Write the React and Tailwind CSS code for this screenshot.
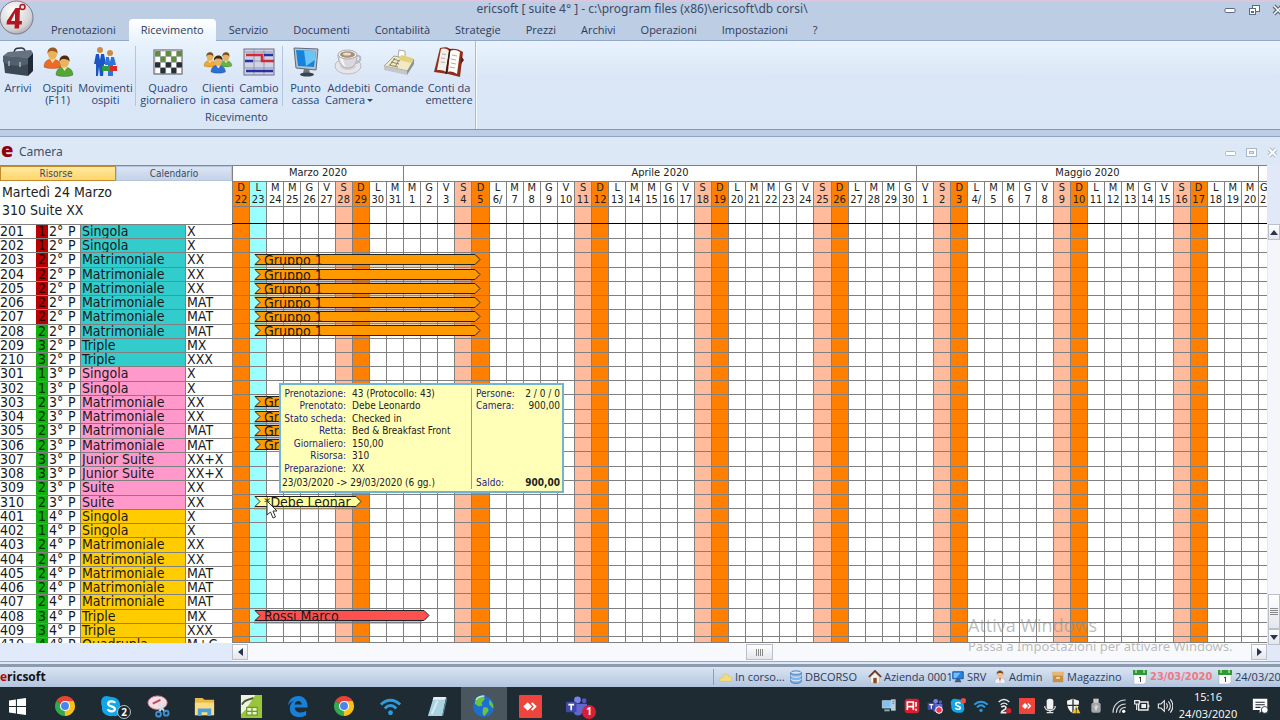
import React, { useState } from 'react';

const MENU = [
  'Prenotazioni',
  'Ricevimento',
  'Servizio',
  'Documenti',
  'Contabilità',
  'Strategie',
  'Prezzi',
  'Archivi',
  'Operazioni',
  'Impostazioni',
  '?',
];

const TEAL = 'bg-[#33cccc]';
const PINK = 'bg-[#ff99cc]';
const AMBER = 'bg-[#ffcc00]';

const group = (shade) => ({ label: 'Gruppo 1', nights: 13, fill: '#ff9900', shade });

const ROOMS = [
  { n: '201', beds: 1, dirty: true, type: 'Singola', code: 'X', color: TEAL },
  { n: '202', beds: 1, dirty: true, type: 'Singola', code: 'X', color: TEAL },
  { n: '203', beds: 2, dirty: true, type: 'Matrimoniale', code: 'XX', color: TEAL, bar: group('tan') },
  { n: '204', beds: 2, dirty: true, type: 'Matrimoniale', code: 'XX', color: TEAL, bar: group('gray') },
  { n: '205', beds: 2, dirty: true, type: 'Matrimoniale', code: 'XX', color: TEAL, bar: group('tan') },
  { n: '206', beds: 2, dirty: true, type: 'Matrimoniale', code: 'MAT', color: TEAL, bar: group('gray') },
  { n: '207', beds: 2, dirty: true, type: 'Matrimoniale', code: 'MAT', color: TEAL, bar: group('tan') },
  { n: '208', beds: 2, type: 'Matrimoniale', code: 'MAT', color: TEAL, bar: group('none') },
  { n: '209', beds: 3, type: 'Triple', code: 'MX', color: TEAL },
  { n: '210', beds: 3, type: 'Triple', code: 'XXX', color: TEAL },
  { n: '301', beds: 1, type: 'Singola', code: 'X', color: PINK },
  { n: '302', beds: 1, type: 'Singola', code: 'X', color: PINK },
  { n: '303', beds: 2, type: 'Matrimoniale', code: 'XX', color: PINK, bar: group('gray') },
  { n: '304', beds: 2, type: 'Matrimoniale', code: 'XX', color: PINK, bar: group('gray') },
  { n: '305', beds: 2, type: 'Matrimoniale', code: 'MAT', color: PINK, bar: group('gray') },
  { n: '306', beds: 2, type: 'Matrimoniale', code: 'MAT', color: PINK, bar: group('none') },
  { n: '307', beds: 3, type: 'Junior Suite', code: 'XX+X', color: PINK },
  { n: '308', beds: 3, type: 'Junior Suite', code: 'XX+X', color: PINK },
  { n: '309', beds: 2, type: 'Suite', code: 'XX', color: PINK },
  { n: '310', beds: 2, type: 'Suite', code: 'XX', color: PINK, bar: { label: '*Debe Leonar', nights: 6, fill: '#ffff99', shade: 'tan' } },
  { n: '401', beds: 1, type: 'Singola', code: 'X', color: AMBER },
  { n: '402', beds: 1, type: 'Singola', code: 'X', color: AMBER },
  { n: '403', beds: 2, type: 'Matrimoniale', code: 'XX', color: AMBER },
  { n: '404', beds: 2, type: 'Matrimoniale', code: 'XX', color: AMBER },
  { n: '405', beds: 2, type: 'Matrimoniale', code: 'MAT', color: AMBER },
  { n: '406', beds: 2, type: 'Matrimoniale', code: 'MAT', color: AMBER },
  { n: '407', beds: 2, type: 'Matrimoniale', code: 'MAT', color: AMBER },
  { n: '408', beds: 3, type: 'Triple', code: 'MX', color: AMBER, bar: { label: 'Rossi Marco', nights: 10, fill: '#ff5050', shade: 'gray' } },
  { n: '409', beds: 3, type: 'Triple', code: 'XXX', color: AMBER },
  { n: '410', beds: 4, type: 'Quadrupla', code: 'M+C', color: AMBER },
];

// 22 March 2020 is a Sunday
const LETTERS = ['D', 'L', 'M', 'M', 'G', 'V', 'S'];
const DAYS = Array.from({ length: 61 }, (_, i) => {
  const date = new Date(2020, 2, 22 + i);
  const w = i % 7;
  const firstMonday = w === 1 && date.getDate() <= 7;
  let bg = 'bg-white';
  if (w === 0) bg = 'bg-[#ff8000]';
  if (w === 6) bg = 'bg-[#ffbb9b]';
  if (i === 1) bg = 'bg-[#99ffff]';
  return { letter: LETTERS[w], num: firstMonday ? `${date.getDate()}/` : date.getDate(), bg };
});

const COLS = 'grid grid-cols-[repeat(60,minmax(0,1fr))_9px]';
const ROWS = 'grid grid-rows-[repeat(29,minmax(0,1fr))_6px]';
const ROOM_COLS = 'grid grid-cols-[36px_12px_18px_14px_106px_1fr]';

const SHADES = {
  tan: 'bg-[#c89030]/40',
  gray: 'bg-[#707090]/40',
  none: 'hidden',
};

/* ---------- ribbon icons ---------- */

const Person = ({ x, y, s = 1, hair, shirt }) => (
  <g transform={`translate(${x} ${y}) scale(${s})`}>
    <path d="M0 20c0-6 4-8 8-8s9 2 9 8c-4 2-13 2-17 0z" fill={shirt} stroke="#0003" />
    <path d="M6 12l2.500 4 3-4z" fill="#f7e3b0" />
    <ellipse cx="8.500" cy="7" rx="4.500" ry="5.500" fill="#e9b25c" />
    <path d="M3.500 7C3 2 6 .5 9 .5S14 3 13.500 7C12.500 4 9 4 7 4 5 4 4.500 5 3.500 7z" fill={hair} />
  </g>
);

const BriefcaseIcon = () => (
  <svg viewBox="0 0 32 32" className="size-8">
    <path d="M12 6c1-4 3-4 7-4 3 0 4 1 4 4" fill="none" stroke="#2b3440" strokeWidth="1.500" />
    <path d="M1 10l5-4 23-2 2 3-5 5z" fill="#66727f" />
    <path d="M1 10l25 2v18L3 27z" fill="#3c4856" />
    <path d="M26 12l5-5v18l-5 5z" fill="#202934" />
    <path d="M1 10l25 2v6c-6 3-19 2-25-2z" fill="#515f6e" />
    <path d="M7 15v5M18 16v5" stroke="#aab4bc" strokeWidth="1.500" />
  </svg>
);

const GuestsIcon = () => (
  <svg viewBox="0 0 32 32" className="size-8">
    <Person x={2} y={1} s={1} hair="#9b5b1c" shirt="#f06a22" />
    <Person x={14} y={9} s={1} hair="#4a2a10" shirt="#52a833" />
  </svg>
);

const MovesIcon = () => (
  <svg viewBox="0 0 32 32" className="size-8">
    <circle cx="10" cy="4" r="3" fill="#c98b45" />
    <path d="M6 8h8l2 10h-2l-1 12h-3l-1-9-1 9H6L6 18H4z" fill="#1b55c4" />
    <path d="M9 8h2l-1 6z" fill="#fff" />
    <circle cx="20" cy="7" r="3" fill="#c98b45" />
    <path d="M16 11h8l2 8h-3v11h-5V19h-3z" fill="#2f74dd" />
    <path d="M19 11h2l-1 5z" fill="#fff" />
    <rect x="12" y="20" width="8" height="5" fill="#2c9b45" />
    <rect x="20" y="20" width="7" height="5" fill="#d92b2b" />
  </svg>
);

const BoardIcon = () => (
  <svg viewBox="0 0 32 32" className="size-8">
    <rect x="2" y="4" width="28" height="24" fill="#fff" stroke="#555" />
    {[0, 1, 2, 3].map((r) =>
      [0, 1, 2, 3, 4].map((c) =>
        (r + c) % 2 === 0 ? (
          <rect key={`${r}-${c}`} x={3 + c * 5.400} y={5 + r * 5.600} width="5.400" height="5.600" rx="1" fill={r < 2 ? '#5d8f3c' : '#26303a'} />
        ) : (
          <rect key={`${r}-${c}`} x={3 + c * 5.400} y={5 + r * 5.600} width="5.400" height="5.600" fill="none" stroke="#999" strokeWidth="0.600" />
        )
      )
    )}
  </svg>
);

const ClientsIcon = () => (
  <svg viewBox="0 0 32 32" className="size-8">
    <Person x={2} y={6} s={0.700} hair="#7a4b1c" shirt="#f0a928" />
    <Person x={18} y={6} s={0.700} hair="#7a4b1c" shirt="#63b447" />
    <Person x={9} y={9} s={0.850} hair="#3c2410" shirt="#2e6fd6" />
  </svg>
);

const PlanIcon = () => (
  <svg viewBox="0 0 32 32" className="size-8">
    <rect x="1" y="3" width="30" height="26" fill="#cfd3e4" stroke="#6b6f86" />
    <path d="M1 6h30M11 3v26M21 3v26M1 15h30M1 22h30" stroke="#9297b0" />
    <path d="M3 9h16v6h12" fill="none" stroke="#d22b35" strokeWidth="2.500" />
    <path d="M21 9h9M2 15h8M3 25h27" stroke="#2631a5" strokeWidth="2.500" />
  </svg>
);

const MonitorIcon = () => (
  <svg viewBox="0 0 32 32" className="size-8">
    <path d="M4 2l24 1-2 21-20-2z" fill="#b9c3cc" stroke="#5e6a75" />
    <path d="M6 4l20 1-2 16-16-1z" fill="#1583dc" />
    <path d="M14 4.500l12 .5-1 9-9 6z" fill="#6cc4f6" />
    <path d="M14 23h5l1 4H13z" fill="#6b7681" />
    <ellipse cx="17" cy="28.500" rx="7" ry="2" fill="#39434d" />
  </svg>
);

const CoffeeIcon = () => (
  <svg viewBox="0 0 32 32" className="size-8">
    <ellipse cx="15" cy="20" rx="13" ry="8" fill="#e6e6ea" stroke="#bdbdc4" />
    <ellipse cx="15" cy="20" rx="8" ry="4" fill="#cfcfd5" />
    <path d="M23 10c6-2 6 6-1 7" fill="none" stroke="#b9b9bf" strokeWidth="2" />
    <path d="M5 9c0 8 4 13 10 13s9-5 9-13z" fill="#d9d9dd" stroke="#b2b2b8" />
    <path d="M7 12c1 5 3 8 6 9-2-3-3-6-3-9z" fill="#f7f7f8" />
    <ellipse cx="14.500" cy="8.500" rx="9.500" ry="4.500" fill="#f1eeea" stroke="#aaa" />
    <ellipse cx="14.500" cy="8.500" rx="7.500" ry="3.200" fill="#a88e76" />
    <ellipse cx="14" cy="8" rx="4" ry="1.500" fill="#e8dccb" />
  </svg>
);

const RegisterIcon = () => (
  <svg viewBox="0 0 32 32" className="size-8">
    <path d="M16 4l6 1v8l-7-2z" fill="#fff" stroke="#aaa" />
    <path d="M11 10l20 4-6 11L1 20z" fill="#efe9c6" stroke="#a9a48c" />
    <path d="M18 9l12 3-2 5-12-3z" fill="#e3d07a" />
    <path d="M1 20l23 5v4L1 24z" fill="#c3c6cc" />
    <path d="M24 25l7-12v5l-7 11z" fill="#8d9299" />
    <path d="M10 13l7 2M8 16l8 2M6 19l9 2M12 12l-5 7M16 14l-4 7" stroke="#8a8768" />
  </svg>
);

const BookIcon = () => (
  <svg viewBox="0 0 32 32" className="size-8">
    <path d="M7 2c5-1 8-1 10 1 4-1 9 0 13 3l-3 25-12-3-14-2z" fill="#8c2f1f" />
    <path d="M8 3c4-1 7 0 8 2l-3 21c-3-2-6-2-9-2z" fill="#f3efe9" />
    <path d="M17 5c4-2 7-1 10 1l-3 22c-3-2-6-3-9-2z" fill="#fffdf9" />
    <path d="M17 3l-4 25" stroke="#2b1a15" strokeWidth="1.500" />
    <path d="M9 8l4 .5M8 12l4 .5M8 16l4 .5M19 9l5 1M18 13l5 1M18 17l5 1M17 21l5 1" stroke="#b8b0a8" />
    <path d="M28 10l3 4-3 4z" fill="#5c1c12" />
  </svg>
);

const RIBBON = [
  [
    { label: ['Arrivi'], icon: BriefcaseIcon, w: 'w-[36px]' },
    { label: ['Ospiti', '(F11)'], icon: GuestsIcon, w: 'w-[43px]' },
    { label: ['Movimenti', 'ospiti'], icon: MovesIcon, w: 'w-[53px]' },
  ],
  [
    { label: ['Quadro', 'giornaliero'], icon: BoardIcon, w: 'w-[58px]' },
    { label: ['Clienti', 'in casa'], icon: ClientsIcon, w: 'w-[42px]' },
    { label: ['Cambio', 'camera'], icon: PlanIcon, w: 'w-[40px]' },
  ],
  [
    { label: ['Punto', 'cassa'], icon: MonitorIcon, w: 'w-[39px]' },
    { label: ['Addebiti', 'Camera'], icon: CoffeeIcon, w: 'w-[48px]', menu: true },
    { label: ['Comande'], icon: RegisterIcon, w: 'w-[52px]' },
    { label: ['Conti da', 'emettere'], icon: BookIcon, w: 'w-[48px]' },
  ],
];

const TitleBar = () => (
  <div className="relative h-[19px] border-t-2 border-[#dcc5dd]">
    <h1 className="pl-1 text-center font-['Noto_Sans',sans-serif] text-[12px] leading-[14px] text-[#3d4b68]">
      ericsoft [ suite 4° ] - c:\program files (x86)\ericsoft\db corsi\
    </h1>
    <div className="absolute top-0 -right-1 flex h-4 items-center gap-3">
      <button aria-label="Riduci a icona">
        <svg viewBox="0 0 12 12" className="size-3"><rect x="1" y="4.500" width="10" height="4" rx="1" fill="#fff" stroke="#5f6b85" /></svg>
      </button>
      <button aria-label="Ripristina">
        <svg viewBox="0 0 12 12" className="size-3">
          <rect x="4.500" y="1.500" width="7" height="6" fill="#fff" stroke="#5f6b85" />
          <rect x="1.500" y="4.500" width="6" height="6" fill="#fff" stroke="#5f6b85" />
          <rect x="3" y="7" width="3" height="2" fill="#5f6b85" />
        </svg>
      </button>
      <button aria-label="Chiudi">
        <svg viewBox="0 0 12 12" className="size-3">
          <path d="M2 2l8 8M10 2l-8 8" stroke="#5f6b85" strokeWidth="4" />
          <path d="M2 2l8 8M10 2l-8 8" stroke="#fff" strokeWidth="1.500" />
        </svg>
      </button>
    </div>
  </div>
);

const Logo = () => (
  <button aria-label="Menu principale" className="absolute top-0 -left-px z-10">
    <svg viewBox="0 0 35 35" className="size-[35px]">
      <defs>
        <radialGradient id="orb" cx="0.400" cy="0.300" r="0.800">
          <stop offset="0" stopColor="#ffffff" />
          <stop offset="0.700" stopColor="#d3d3d6" />
          <stop offset="1" stopColor="#9a9aa2" />
        </radialGradient>
      </defs>
      <circle cx="17.500" cy="17.500" r="16.500" fill="url(#orb)" stroke="#777c8c" />
      <path d="M16.500 8h4.500l-.5 13h2.500l-.3 3.500h-2.400l-.3 4h-4.500l.3-4H7.500l.4-3.500zM16 13l-4 8h4z" fill="#b01720" />
      <circle cx="23.500" cy="7" r="2.500" fill="none" stroke="#b01720" strokeWidth="1.500" />
    </svg>
  </button>
);

const Ribbon = () => (
  <div className="flex h-[90px] border-y border-t-[#8fa9cc] border-b-[#7f95b8] bg-linear-to-b from-[#e9f3fe] via-[#dbe7f6] via-40% to-[#d8e6f6] text-[11px] leading-[12px] text-[#2c4470]">
    <section className="flex flex-col border-r border-[#a9bdd9] pr-[2px] shadow-[1px_0_0_#f3f8fe]">
      <div className="flex">
        {RIBBON.map((items, g) => (
          <div key={g} className={`my-[5px] flex h-[60px] ${g < 2 ? 'mr-[3px] border-r border-[#b4c6df] pr-[3px]' : ''}`}>
            {items.map((item) => {
              const Icon = item.icon;
              return (
                <button key={item.label[0]} className={`flex ${item.w} flex-col items-center whitespace-nowrap`}>
                  <Icon />
                  <span className="mt-[4px]">{item.label[0]}</span>
                  <span className="flex items-center">
                    {item.label[1]}
                    {item.menu && <span className="ml-[2px] border-x-[3px] border-t-[3px] border-x-transparent border-t-[#2c4470]" />}
                  </span>
                </button>
              );
            })}
          </div>
        ))}
      </div>
      <h2 className="text-center">Ricevimento</h2>
    </section>
  </div>
);

/* ---------- planning ---------- */

const RoomList = () => (
  <table className="flex min-h-0 flex-1 text-[14px] leading-[12px] text-[#1a1a1a]">
    <tbody className={`${ROWS} w-full`}>
      {ROOMS.map((r) => (
        <tr key={r.n} className={`${ROOM_COLS} overflow-hidden border-t border-[#808080] bg-white`}>
          <th scope="row" className="text-left font-normal">{r.n}</th>
          <td className={`text-center ${r.dirty ? 'bg-[#b80000] text-[#300000]' : 'bg-[#10b010] text-[#053005]'}`}>{r.beds}</td>
          <td className="pl-px whitespace-nowrap">{r.n[0]}°</td>
          <td className="pl-[2px]">P</td>
          <td className={`border-x border-[#808080] pl-px ${r.color}`}>{r.type}</td>
          <td className="pl-px">{r.code}</td>
        </tr>
      ))}
    </tbody>
  </table>
);

const Bar = ({ bar }) => (
  <div className="absolute top-px left-1 z-10 h-[14px]" style={{ width: `calc(${bar.nights} * (100% + 1px) + 5px)` }}>
    <div className="flex h-[11px]">
      <svg viewBox="0 0 8 11" className="h-[11px] w-2 flex-none">
        <path d="M8 .5H1L6 5.500 1 10.500H8" fill={bar.fill} stroke="#222" />
      </svg>
      <span
        className="min-w-0 flex-1 overflow-hidden border-y border-[#222] pl-[2px] text-left text-[14px] leading-[11px] whitespace-nowrap text-[#1a1a1a]"
        style={{ backgroundColor: bar.fill }}
      >
        {bar.label}
      </span>
      <svg viewBox="0 0 8 11" className="h-[11px] w-2 flex-none">
        <path d="M0 .5H2L7 5.500 2 10.500H0" fill={bar.fill} stroke="#222" />
      </svg>
    </div>
    <div className={`mr-2 h-[3px] ${SHADES[bar.shade]}`} />
  </div>
);

const Calendar = () => (
  <table className="flex min-h-0 flex-1 flex-col text-[#222]">
    <thead className="flex flex-col border-t border-[#808080] text-[11px] leading-[12px]">
      <tr className="grid h-[15px] grid-cols-[10fr_30fr_20fr_9px] text-center leading-[14px]">
        <th className="border-l border-[#808080] font-normal">Marzo 2020</th>
        <th className="border-l border-[#808080] font-normal">Aprile 2020</th>
        <th className="border-l border-[#808080] font-normal">Maggio 2020</th>
        <th className="border-l border-[#808080]" />
      </tr>
      <tr className={`${COLS} h-[25px] border-t border-[#808080]`}>
        {DAYS.map((d, i) => (
          <th
            key={i}
            className={`flex flex-col overflow-hidden border-l border-[#808080] font-normal ${i === 60 ? 'items-start pl-px' : 'items-center'} ${d.bg}`}
          >
            <span>{d.letter}</span>
            <span>{d.num}</span>
          </th>
        ))}
      </tr>
      <tr className={`${COLS} h-[18px] border-t border-b border-t-[#808080] border-b-black`}>
        {DAYS.map((d, i) => (
          <td key={i} className={`border-l border-[#808080] ${d.bg}`} />
        ))}
      </tr>
    </thead>
    <tbody className={`${ROWS} min-h-0 flex-1 border-b border-[#808080]`}>
      {ROOMS.map((r, k) => (
        <tr key={r.n} className={`${COLS} min-h-0 ${k > 0 ? 'border-t border-[#808080]' : ''}`}>
          {DAYS.map((d, i) => (
            <td key={i} className={`relative border-l border-[#808080] ${d.bg}`}>
              {i === 1 && r.bar && <Bar bar={r.bar} />}
            </td>
          ))}
        </tr>
      ))}
    </tbody>
  </table>
);

const DETAILS = [
  ['Prenotazione:', '43 (Protocollo: 43)'],
  ['Prenotato:', 'Debe Leonardo'],
  ['Stato scheda:', 'Checked in'],
  ['Retta:', 'Bed & Breakfast Front'],
  ['Giornaliero:', '150,00'],
  ['Risorsa:', '310'],
  ['Preparazione:', 'XX'],
];

const BookingTooltip = () => (
  <div
    role="tooltip"
    className="absolute top-[218px] left-[47px] z-20 flex h-[110px] w-[285px] border-2 border-[#6fb4d2] bg-[#ffffb8] px-px pt-[3px] text-[10px] leading-[12px] whitespace-nowrap text-[#222]"
  >
    <div className="flex flex-1 flex-col">
      <dl className="grid h-[87px] auto-rows-fr grid-cols-[64px_1fr] gap-x-[6px]">
        {DETAILS.map(([k, v]) => (
          <React.Fragment key={k}>
            <dt className="text-right text-[#1f1f80]">{k}</dt>
            <dd>{v}</dd>
          </React.Fragment>
        ))}
      </dl>
      <p className="mt-[2px]">{'23/03/2020 -> 29/03/2020 (6 gg.)'}</p>
    </div>
    <dl className="mb-[2px] grid w-[90px] grid-cols-[1fr_auto] grid-rows-[12px_12px_1fr_12px] border-l border-[#6fa8c8] pr-px pl-1">
      <dt className="text-[#1f1f80]">Persone:</dt>
      <dd>2 / 0 / 0</dd>
      <dt className="text-[#1f1f80]">Camera:</dt>
      <dd className="text-right">900,00</dd>
      <dt className="row-start-4 text-[#1f1f80]">Saldo:</dt>
      <dd className="row-start-4 text-right font-bold">900,00</dd>
    </dl>
  </div>
);

const Pointer = () => (
  <svg viewBox="0 0 12 19" className="absolute top-[335px] left-[34px] z-30 h-[19px] w-3">
    <path d="M1 1v14l3.500-3 2.500 6 2.500-1-2.500-6H11z" fill="#fff" stroke="#333" />
  </svg>
);

const arrow = 'flex flex-none items-center justify-center border border-[#b9c0cc] bg-linear-to-b from-white to-[#e3e6ec]';

const Planning = () => {
  const [view, setView] = useState('Risorse');
  return (
    <main className="flex min-h-0 flex-1 bg-white font-['DejaVu_Sans_Condensed','DejaVu_Sans',sans-serif]">
      <aside className="flex w-[232px] flex-none flex-col">
        <div className="grid h-[16px] flex-none grid-cols-2 border-t border-[#8a8a8a] text-[10px] leading-[14px] text-[#3d4a60]">
          {['Risorse', 'Calendario'].map((name) => (
            <button
              key={name}
              onClick={() => setView(name)}
              className={`border ${view === name ? 'border-[#c48a30] bg-linear-to-b from-[#ffe9a0] to-[#ffd566] pr-1' : 'border-[#b6c5dc] bg-linear-to-b from-[#dbe5f3] to-[#c3d2e8]'}`}
            >
              <span className="block h-[13px]">{name}</span>
            </button>
          ))}
        </div>
        <div className="h-[43px] flex-none pt-[2px] pl-[2px] text-[14px] leading-[18px] text-[#222]">
          <p>Martedì 24 Marzo</p>
          <p>310 Suite XX</p>
        </div>
        <RoomList />
        <div className="h-[18px] flex-none bg-[#e0eafb]" />
      </aside>
      <div className="relative flex min-w-0 flex-1 flex-col">
        <Calendar />
        <BookingTooltip />
        <Pointer />
        <div className="flex h-[18px] flex-none bg-[#f8f9fc] py-px">
          <button aria-label="Scorri a sinistra" className={`${arrow} w-4`}>
            <span className="border-y-4 border-r-[5px] border-y-transparent border-r-[#2a3350]" />
          </button>
          <div className="flex flex-1 justify-center pl-5">
            <button aria-label="Barra di scorrimento orizzontale" className={`${arrow} w-[27px] gap-px`}>
              <span className="h-[7px] w-px bg-[#888]" />
              <span className="h-[7px] w-px bg-[#888]" />
              <span className="h-[7px] w-px bg-[#888]" />
              <span className="h-[7px] w-px bg-[#888]" />
            </button>
          </div>
          <button aria-label="Scorri a destra" className={`${arrow} w-4`}>
            <span className="border-y-4 border-l-[5px] border-y-transparent border-l-[#2a3350]" />
          </button>
        </div>
      </div>
      <div className="flex w-[13px] flex-none flex-col items-end overflow-hidden bg-[#e1e9f9] pt-[59px]">
        <button aria-label="Scorri in alto" className={`${arrow} h-4 w-3`}>
          <span className="border-x-4 border-b-[5px] border-x-transparent border-b-[#2a3350]" />
        </button>
        <div className="w-3 flex-1 bg-[#f4f6fb]" />
        <button aria-label="Barra di scorrimento verticale" className={`${arrow} h-[35px] w-3 flex-col gap-px`}>
          <span className="h-px w-2 bg-[#888]" />
          <span className="h-px w-2 bg-[#888]" />
          <span className="h-px w-2 bg-[#888]" />
          <span className="h-px w-2 bg-[#888]" />
        </button>
        <button aria-label="Scorri in basso" className={`${arrow} mb-4 h-4 w-3`}>
          <span className="border-x-4 border-t-[5px] border-x-transparent border-t-[#2a3350]" />
        </button>
      </div>
    </main>
  );
};

/* ---------- status bar ---------- */

const CalendarIcon = () => (
  <svg viewBox="0 0 16 16" className="size-4 flex-none">
    <path d="M2 3h12v10l-2 2H2z" fill="#fff" stroke="#aab" strokeWidth="0.500" />
    <path d="M1 1h14v5H1z" fill="#2f9a35" />
    <path d="M4 0v4M12 0v4" stroke="#e9f5e9" />
    <path d="M7 9l1.500-1v5" fill="none" stroke="#444" />
  </svg>
);

const STATUS = [
  { text: 'In corso...', w: 'w-[70px]', icon: <path d="M1 13c-1-4 2-5 3-4 0-5 6-6 7-2 4 0 4 5 3 6z" fill="#f2dc7c" stroke="#d0b650" strokeWidth="0.500" /> },
  {
    text: 'DBCORSO',
    w: 'w-[79px]',
    icon: (
      <>
        <path d="M2 3v10c0 3 12 3 12 0V3z" fill="#7fb3ea" stroke="#3f75b5" />
        <ellipse cx="8" cy="3" rx="6" ry="2" fill="#d5e8fb" stroke="#3f75b5" />
        <path d="M2 6c0 3 12 3 12 0M2 10c0 3 12 3 12 0" fill="none" stroke="#e9f4ff" />
      </>
    ),
  },
  {
    text: 'Azienda 0001',
    w: 'w-[83px]',
    icon: (
      <>
        <path d="M3 8l5-5 5 5v7H3z" fill="#f8f4ea" stroke="#999" strokeWidth="0.500" />
        <path d="M1 8l7-7 7 7" fill="none" stroke="#6b3420" strokeWidth="2" />
        <path d="M6 9h4v6H6z" fill="#8c4a22" />
      </>
    ),
  },
  {
    text: 'SRV',
    w: 'w-[42px]',
    icon: (
      <>
        <path d="M2 2h12v8H2z" fill="#2682e0" stroke="#1b4f90" />
        <path d="M3 3h8l-5 6H3z" fill="#74bdf7" />
        <path d="M6 10h4l2 4H4z" fill="#3b5f8a" />
      </>
    ),
  },
  {
    text: 'Admin',
    w: 'w-[58px]',
    icon: (
      <>
        <path d="M2 15c0-5 3-6 6-6s6 1 6 6z" fill="#f4f4f8" stroke="#aab" strokeWidth="0.500" />
        <path d="M7 9h2l-1 5z" fill="#d24a4a" />
        <circle cx="8" cy="5" r="3.500" fill="#f0c08c" />
        <path d="M4 5c0-6 8-6 8 0-2-2-6-2-8 0z" fill="#7a4a20" />
      </>
    ),
  },
  {
    text: 'Magazzino',
    w: 'w-[81px]',
    icon: (
      <>
        <path d="M2 6h12v8H2z" fill="#c98f45" />
        <path d="M1 2h14v4H1z" fill="#e5b878" />
        <path d="M6 8h4v2H6z" fill="#f5e3c0" />
      </>
    ),
  },
];

const StatusBar = () => (
  <footer className="flex h-[20px] flex-none items-center overflow-hidden bg-linear-to-b from-[#d9e4f3] to-[#b2c5de] text-[#2c3c5c]">
    <p className="flex-1 text-[12px] font-bold text-[#111]">
      <span className="text-[#c00000]">e</span>ricsoft
    </p>
    <ul className="flex items-center border-l border-[#7fa3cf] pl-[5px] text-[11px]">
      {STATUS.map((s) => (
        <li key={s.text} className={`flex items-center gap-[2px] whitespace-nowrap ${s.w}`}>
          <svg viewBox="0 0 16 16" className="size-[14px] flex-none">{s.icon}</svg>
          {s.text}
        </li>
      ))}
      <li className="flex w-[85px] items-center gap-[2px] font-['DejaVu_Sans_Condensed','DejaVu_Sans',sans-serif] font-bold text-[#f07880]">
        <CalendarIcon />
        <span className="w-[64px] overflow-hidden">23/03/2020</span>
      </li>
      <li className="flex w-[63px] items-center gap-[2px] overflow-hidden">
        <CalendarIcon />
        24/03/2020
      </li>
    </ul>
  </footer>
);

/* ---------- windows taskbar ---------- */

const ChromeIcon = () => (
  <svg viewBox="0 0 24 24" className="size-[22px]">
    <path d="M12 12L2.500 6.500A11 11 0 0 1 21.500 6.500z" fill="#e84435" />
    <path d="M12 12L2.500 6.500A11 11 0 0 0 12 23z" fill="#33a852" />
    <path d="M12 12h-.5L12 23A11 11 0 0 0 21.500 6.500H12z" fill="#fbc117" />
    <circle cx="12" cy="12" r="5.500" fill="#fff" />
    <circle cx="12" cy="12" r="4.300" fill="#4a84ee" />
  </svg>
);

const SkypeShape = () => (
  <>
    <path d="M7 1c2 0 3 1 5 1 6 0 10 5 9 11 2 5-2 10-7 9C7 23 1 19 2 12 0 6 2 1 7 1z" fill="#12a5e8" />
    <path d="M15.500 8.500C15 6 8.500 6 8.500 9.300c0 3.200 7 1.900 7 5.200 0 3.400-6.700 3.200-7.300.2" fill="none" stroke="#fff" strokeWidth="2.300" />
  </>
);

const Waves = ({ color }) => (
  <>
    <path d="M2 10c6-6 14-6 20 0M6 14c4-4 8-4 12 0" fill="none" stroke={color} strokeWidth="3" />
    <circle cx="12" cy="18.500" r="2.500" fill={color} />
  </>
);

const TeamsShape = () => (
  <>
    <circle cx="13" cy="5" r="3.500" fill="#7b83eb" />
    <circle cx="20" cy="6" r="2.500" fill="#5059c9" />
    <path d="M9 9h9v8c0 6-9 6-9 0zM18 9h5v6c0 4-5 4-5 1z" fill="#6068cf" />
    <rect x="1" y="7" width="11" height="11" rx="1" fill="#4048a8" />
    <path d="M3.500 10h6M6.500 10v6" stroke="#fff" strokeWidth="1.700" />
  </>
);

const AnyDeskShape = () => (
  <>
    <rect x="0" y="0" width="24" height="24" rx="1" fill="#ef443b" />
    <path d="M9 7.500l4.500 4.500L9 16.500 4.500 12z" fill="#fff" />
    <path d="M14 7.500l4.500 4.500-4.500 4.500-1.500-1.500 3-3-3-3z" fill="#fff" />
  </>
);

const Svg24 = ({ children }) => <svg viewBox="0 0 24 24" className="size-[23px]">{children}</svg>;

const APPS = [
  { name: 'Chrome', icon: <ChromeIcon /> },
  { name: 'Skype', icon: <Svg24><SkypeShape /></Svg24>, badge: '2', badgeStyle: 'bg-[#1b2730] border border-[#b8bec4]' },
  {
    name: 'Strumento di cattura',
    icon: (
      <Svg24>
        <ellipse cx="11" cy="8" rx="10" ry="7" fill="#f3dfe3" stroke="#c98793" />
        <path d="M6 9l8-4" stroke="#b84a5c" strokeWidth="2" />
        <path d="M12 9l7 9M18 9l-5 8" stroke="#d8dee5" strokeWidth="2" />
        <circle cx="12" cy="20" r="2.500" fill="none" stroke="#3f8fd4" strokeWidth="2" />
        <circle cx="20" cy="19" r="2.500" fill="none" stroke="#3f8fd4" strokeWidth="2" />
      </Svg24>
    ),
  },
  {
    name: 'Esplora file',
    icon: (
      <Svg24>
        <path d="M2 3h8l2 2h10v16H2z" fill="#e9b94a" />
        <path d="M2 8h20v13H2z" fill="#fbdc83" />
        <path d="M5 14h14v8h-4v-4H9v4H5z" fill="#4aa0df" />
      </Svg24>
    ),
  },
  {
    name: 'Calc',
    icon: (
      <Svg24>
        <path d="M1 0h22v24H1z" fill="#9ac43c" />
        <path d="M1 0h15L6 15l-5 5z" fill="#eef3e0" />
        <path d="M2 10c3-6 6-4 12-7-4 2-8 1-10 4" fill="none" stroke="#4a5a3c" strokeWidth="1.800" />
        <path d="M7 13h11v8H7zM12.500 13v8M7 17h11" fill="#e8f2cd" stroke="#6f9a20" strokeWidth="1.300" />
      </Svg24>
    ),
  },
  {
    name: 'Edge',
    icon: (
      <Svg24>
        <path d="M2 11C3 4 8 1 13 1c6 0 10 5 9.500 12H9c0 5 7 7 12 3.500V21c-7 4-17 2-17-7 0-4 2-7 5-8-3 .5-5.500 2-7 5zm7-1h7.500c0-5-7-5-7.500 0z" fill="#1a7fd6" />
      </Svg24>
    ),
  },
  { name: 'Chrome', icon: <ChromeIcon /> },
  { name: 'Wi-Fi', icon: <Svg24><Waves color="#2f9bdc" /></Svg24> },
  {
    name: 'Blocco note',
    icon: (
      <Svg24>
        <path d="M8 2h13l-4 20H2z" fill="#a9d3e0" />
        <path d="M8 2h13l-1 3H7z" fill="#e8eef0" />
        <path d="M21 2l1 2-4 18h-1z" fill="#5b7f8d" />
        <path d="M12 6l-6 14" stroke="#d6ecf2" strokeWidth="2" />
      </Svg24>
    ),
  },
  {
    name: 'Ericsoft',
    active: true,
    icon: (
      <Svg24>
        <circle cx="12" cy="12" r="11" fill="#1c6fd0" />
        <path d="M6 3c5-3 8-1 7 2l-3 3 1 3-4 1-4-3c0-3 1-5 3-6zM12 13c4-1 6 1 5 4l-4 5c-3-2-2-6-1-9zM18 5c4 3 5 7 4 9l-4-4z" fill="#6cc33c" />
        <path d="M4 5c2-3 6-4 9-4" fill="none" stroke="#b8e6f8" strokeWidth="1.500" />
      </Svg24>
    ),
  },
  { name: 'AnyDesk', icon: <Svg24><AnyDeskShape /></Svg24> },
  { name: 'Teams', icon: <Svg24><TeamsShape /></Svg24>, badge: '1', badgeStyle: 'bg-[#d81f3a]' },
];

const TRAY = [
  { name: 'Desktop remoto', icon: <><path d="M2 4h13v11H2z" fill="#7fc3f0" stroke="#cfe4f2" /><path d="M15 2h7v17h-7z" fill="#b9cede" /><path d="M5 17h8v3H5z" fill="#8aa" /><path d="M17 5h3M17 8h3" stroke="#567" /></> },
  { name: 'Antivirus Avira', icon: <><rect x="1" y="1" width="22" height="22" rx="5" fill="#d81f2e" /><path d="M5 18V6h9v12M5 13h9M18 6v7M18 16v3" fill="none" stroke="#fff" strokeWidth="2.500" /></> },
  { name: 'Teams', icon: <><TeamsShape /><circle cx="18" cy="18" r="5" fill="#e8364e" stroke="#fff" strokeWidth="1.500" /></> },
  { name: 'Skype', icon: <><SkypeShape /><circle cx="20" cy="4" r="4" fill="#e8503f" /></> },
  { name: 'Rete Wi-Fi', icon: <Waves color="#2f9bdc" /> },
  { name: 'Hotspot', icon: <><path d="M4 6c5-5 11-5 16 0M7 10c3-3 7-3 10 0" fill="none" stroke="#e8e8e8" strokeWidth="2" /><path d="M8 14c2-3 7-2 7 1s-7 3-7 7h8" fill="none" stroke="#e8e8e8" strokeWidth="2.500" /><circle cx="19" cy="19" r="4" fill="#d82030" /></> },
  { name: 'AnyDesk', icon: <AnyDeskShape /> },
  { name: 'Microfono', icon: <><rect x="7" y="1" width="10" height="16" rx="4" fill="#f2f2f2" /><path d="M4 12c0 9 16 9 16 0M12 19v3M7 22h10" fill="none" stroke="#ddd" strokeWidth="2" /></> },
  { name: 'Sicurezza', icon: <><path d="M12 1l9 3c0 9-2 15-9 19C5 19 3 13 3 4z" fill="#f5f5f5" /><path d="M12 2v20M3 11h18" stroke="#26323a" strokeWidth="2" /><path d="M17 11l6 12H11z" fill="#f2c230" /><path d="M17 15v4M17 20v2" stroke="#333" strokeWidth="1.500" /></> },
  { name: 'Unità USB', icon: <><rect x="8" y="1" width="8" height="7" fill="#ccc" /><rect x="5" y="7" width="14" height="15" rx="3" fill="#a3a6a9" /><path d="M12 10v9M9 13l3 3 3-4" fill="none" stroke="#eee" strokeWidth="1.500" /></> },
  { name: 'Segnale', icon: <><path d="M3 22C3 10 12 3 22 3M8 22c0-8 6-13 14-13M13 22c0-5 4-8 9-8" fill="none" stroke="#ddd" strokeWidth="1.800" /><circle cx="19" cy="20" r="2.500" fill="#fff" /></> },
  { name: 'Batteria', icon: <><path d="M7 6h14v12H7zM22 10v4" fill="none" stroke="#eee" strokeWidth="2" /><path d="M11 9h7v6h-7z" fill="#eee" /><path d="M1 4h7v5H1zM4 9v9" fill="#26323a" stroke="#eee" strokeWidth="1.800" /></> },
  { name: 'Volume', icon: <path d="M2 9h4l5-5v16l-5-5H2zM14 8c2 2 2 6 0 8M17 5c4 4 4 10 0 14M20 2c5 6 5 14 0 20" fill="none" stroke="#eee" strokeWidth="1.600" /> },
];

const Taskbar = () => (
  <nav aria-label="Barra delle applicazioni" className="flex h-[33px] flex-none overflow-hidden bg-[#1e2b33] text-white">
    <button aria-label="Start" className="mr-2 flex h-[38px] w-[34px] items-center justify-center">
      <svg viewBox="0 0 16 16" className="size-[17px]">
        <path d="M0 2.300L6.500 1.400V7.500H0zM7.500 1.200L16 0v7.500H7.500zM0 8.500h6.500v6.100L0 13.700zM7.500 8.500H16V16l-8.500-1.200z" fill="#fff" />
      </svg>
    </button>
    <div className="flex w-[558px]">
      {APPS.map((a, i) => (
        <button key={i} aria-label={a.name} className={`relative flex h-[38px] flex-1 items-center justify-center ${a.active ? 'bg-[#4a565d]' : ''}`}>
          {a.icon}
          {a.badge && (
            <span className={`absolute right-1 bottom-[6px] size-[14px] rounded-full text-[10px] leading-[13px] font-bold ${a.badgeStyle}`}>{a.badge}</span>
          )}
        </button>
      ))}
    </div>
    <div className="ml-auto flex w-[298px]">
      {TRAY.map((t) => (
        <button key={t.name} aria-label={t.name} className="flex h-[38px] flex-1 items-center justify-center">
          <svg viewBox="0 0 24 24" className="size-4">{t.icon}</svg>
        </button>
      ))}
    </div>
    <div className="w-[64px] pt-px text-center text-[11px] leading-[17px]">
      <p>15:16</p>
      <p>24/03/2020</p>
    </div>
    <button aria-label="Notifiche" className="flex h-[38px] w-[40px] items-center justify-center">
      <svg viewBox="0 0 20 20" className="size-[17px]">
        <path d="M1 1h17v13h-6l-3 4v-4H1z" fill="#fff" />
        <path d="M4 5h11M4 8h11M4 11h6" stroke="#1e2b33" strokeWidth="1.300" />
        <circle cx="15" cy="14" r="4" fill="#fff" stroke="#1e2b33" />
      </svg>
    </button>
  </nav>
);

const App = () => {
  const [tab, setTab] = useState('Ricevimento');
  return (
    <div className="relative flex h-screen flex-col overflow-hidden bg-[#bccde4] font-['Open_Sans',sans-serif]">
      {/* Window header */}
      <header className="relative flex-none">
        <Logo />
        <TitleBar />
        <nav className="relative -mb-px flex gap-px pl-[39px] text-[11px] leading-[22px] text-[#2c3c5c]">
          {MENU.map((m) => (
            <button
              key={m}
              onClick={() => setTab(m)}
              className={`h-[22px] rounded-t-sm px-3 ${m === tab ? 'z-10 bg-linear-to-b from-white to-[#e9f3fe]' : ''}`}
            >
              {m}
            </button>
          ))}
        </nav>
        <Ribbon />
      </header>

      {/* Panel title */}
      <div className="mt-[6px] flex h-[29px] flex-none items-center border-t border-[#8fa3c2] bg-[#dce8f5] pt-[2px]">
        <span className="w-[19px] pb-1 pl-px text-[20px] leading-[20px] font-extrabold text-[#8c0010]">e</span>
        <h2 className="flex-1 font-['Noto_Sans',sans-serif] text-[12px] text-[#3d5070]">Camera</h2>
        <div className="flex gap-[10px]">
          <button aria-label="Riduci">
            <svg viewBox="0 0 11 11" className="size-[11px]"><rect x="0.500" y="4.500" width="10" height="4" rx="1" fill="#fff" stroke="#aab8cc" /></svg>
          </button>
          <button aria-label="Ingrandisci">
            <svg viewBox="0 0 11 11" className="size-[11px]">
              <rect x="0.500" y="1.500" width="10" height="8" fill="#fff" stroke="#aab8cc" />
              <rect x="3.500" y="4.500" width="4" height="2" fill="#dde5f0" stroke="#aab8cc" />
            </svg>
          </button>
          <button aria-label="Chiudi scheda" className="pr-[2px]">
            <svg viewBox="0 0 11 11" className="size-[11px]">
              <path d="M2 2l7 7M9 2l-7 7" stroke="#aab8cc" strokeWidth="4" />
              <path d="M2 2l7 7M9 2l-7 7" stroke="#fff" strokeWidth="2" />
            </svg>
          </button>
        </div>
      </div>

      <Planning />

      <div className="h-[6px] flex-none border-t border-b-3 border-t-[#8fa9cc] border-b-[#8d9bb0] bg-[#dce8f5]" />
      <StatusBar />
      <Taskbar />

      {/* Activation notice */}
      <div className="pointer-events-none absolute right-[40px] bottom-[64px] z-30 w-[272px] whitespace-nowrap text-[#909090]/60">
        <p className="text-[18px] leading-[22px]">Attiva Windows</p>
        <p className="font-['Noto_Sans',sans-serif] text-[13px] leading-[20px]">Passa a Impostazioni per attivare Windows.</p>
      </div>
    </div>
  );
};

export default App;
